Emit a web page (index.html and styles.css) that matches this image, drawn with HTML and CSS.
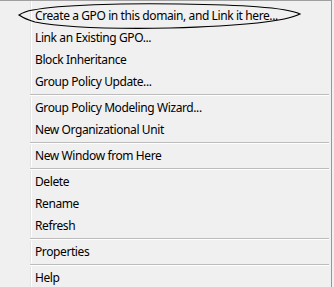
FILE: index.html
```html
<!DOCTYPE html>
<html lang="en">
<head>
  <meta charset="UTF-8">
  <meta name="viewport" content="width=device-width, initial-scale=1.0">
  <title>Context Menu</title>
  <link rel="stylesheet" href="styles.css">
</head>
<body>
  <div class="menu">
    <div class="item first">Create a GPO in this domain, and Link it here...</div>
    <div class="item">Link an Existing GPO...</div>
    <div class="item">Block Inheritance</div>
    <div class="item">Group Policy Update...</div>
    <div class="sep"></div>
    <div class="item">Group Policy Modeling Wizard...</div>
    <div class="item">New Organizational Unit</div>
    <div class="sep"></div>
    <div class="item">New Window from Here</div>
    <div class="sep"></div>
    <div class="item">Delete</div>
    <div class="item">Rename</div>
    <div class="item">Refresh</div>
    <div class="sep"></div>
    <div class="item">Properties</div>
    <div class="sep"></div>
    <div class="item">Help</div>

    <!-- hand-drawn circle around the first entry -->
    <svg class="mark" width="334" height="32" viewBox="0 0 334 32">
      <path d="M33 9 C60 4 120 2 180 3 C240 4 285 6 300 13 C285 21 240 25 170 27 C110 28 60 26 35 21 C28 19 22 16 19 14 C22 12 27 10 33 9 Z"
            fill="none" stroke="#000" stroke-width="1.2"/>
    </svg>
  </div>
</body>
</html>
```

FILE: styles.css
```css
body {
  margin: 0;
  background: #f0f0f0;
  font-family: "Noto Sans", "Open Sans", sans-serif;
  font-size: 12px;
  letter-spacing: -0.4px;
  color: #000;
}
.menu {
  position: relative;
  width: 332px;
  height: 287px;
  padding-top: 4px;
  box-sizing: border-box;
  border-top: 1px solid #a0a0a0;
  border-right: 1px solid #979797;
  background:
    linear-gradient(to right, transparent 30px, #e2e3e3 30px, #e2e3e3 31px, #ffffff 31px, #ffffff 32px, transparent 32px);
}
.item {
  height: 22px;
  line-height: 22px;
  padding-left: 35px;
  white-space: nowrap;
}
.sep {
  height: 4px;
  margin-left: 30px;
  margin-right: 2px;
  background: linear-gradient(#f0f0f0 1px, #bcbcbc 1px, #bcbcbc 2px, #ffffff 2px, #ffffff 3px, #f0f0f0 3px);
}
.mark {
  position: absolute;
  left: 0;
  top: 0;
}
```
